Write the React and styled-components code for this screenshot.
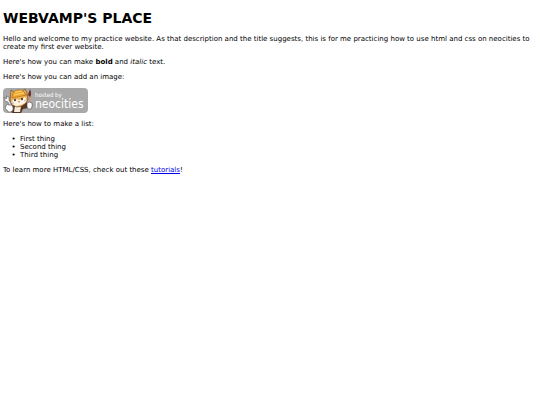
import React from "react";
import styled, { createGlobalStyle } from "styled-components";

const App = () => {
  return (
    <>
      <GlobalStyle />
      <Page>
        <Title>WEBVAMP'S PLACE</Title>
        <Text>
          Hello and welcome to my practice website. As that description and the title suggests, this is for me
          practicing how to use html and css on neocities to create my first ever website.
        </Text>
        <Text>
          Here's how you can make <strong>bold</strong> and <em>italic</em> text.
        </Text>
        <Text>Here's how you can add an image:</Text>
        <NeocitiesBadge />
        <Text>Here's how to make a list:</Text>
        <List>
          <li>First thing</li>
          <li>Second thing</li>
          <li>Third thing</li>
        </List>
        <Text>
          To learn more HTML/CSS, check out these <Link href="#tutorials">tutorials</Link>!
        </Text>
      </Page>
    </>
  );
};

// Penny the cat holding a wrench and a paint brush
const NeocitiesBadge = () => (
  <Badge viewBox="0 0 85 25">
    <rect width="85" height="25" rx="4" fill="#a9a9a9" />
    {/* body */}
    <path d="M9 16 23 14 26 16 25 20 20 21 18 25 9 25 7 20Z" fill="#54382c" />
    <path d="M12 18 18 18 17 24 11 24Z" fill="#f7ead8" />
    {/* head with ears */}
    <path
      d="M8 2 11 4 19 3 22 1 24 5 25 11 23 15 19 18 14 19 9 17 7 13Z"
      fill="#f2b04c"
      stroke="#5c3a1c"
      strokeWidth=".6"
    />
    <path d="M8 13 12 11 17 12 22 9 24 12 22 15 18 17 13 18 9 16Z" fill="#fff4e4" />
    {/* helmet */}
    <path d="M9 8 Q10 2 15 2 Q21 1 22 6 L24 7 9 10Z" fill="#efa52e" stroke="#935e20" strokeWidth=".5" />
    <path d="M12 4 19 3M11 7 21 5" stroke="#ffdc80" strokeWidth=".9" fill="none" />
    {/* face */}
    <ellipse cx="12" cy="12" rx=".9" ry="1.2" fill="#2b2925" />
    <ellipse cx="19" cy="11" rx=".9" ry="1.2" fill="#2b2925" />
    <path d="M15 13 17 13 16 15Z" fill="#d9654b" />
    <path d="M6 12 10 14M7 16 11 15M21 13 25 11" stroke="#5f5143" strokeWidth=".4" />
    {/* wrench and left paw */}
    <path
      d="M1 9 3 11 4 10 3 8 6 9 6 12 9 18 8 20 5 14 2 13Z"
      fill="#f5f5f5"
      stroke="#55504c"
      strokeWidth=".5"
    />
    <path
      d="M3 18 Q4 15 6 17 Q9 16 10 19 Q11 22 8 24 Q5 25 4 22 Q1 21 3 18Z"
      fill="#fff"
      stroke="#4b4542"
      strokeWidth=".6"
    />
    {/* brush and right paw */}
    <path d="M27 8 27 15" stroke="#e5dfd8" strokeWidth="1.8" />
    <path d="M27 8 27 15" stroke="#b4562e" strokeWidth="1" />
    <path d="M27 1 28 4 28 7 27 9 25 7 26 4Z" fill="#742b24" />
    <path
      d="M24 15 Q26 13 29 15 Q30 18 28 21 Q25 22 24 19Z"
      fill="#fff"
      stroke="#4b4542"
      strokeWidth=".6"
    />
    <BadgeText x="32" y="9" fontSize="6">
      hosted by
    </BadgeText>
    <BadgeText x="32" y="20" fontSize="12">
      neocities
    </BadgeText>
  </Badge>
);

export default App;

const GlobalStyle = createGlobalStyle`
  body {
    margin: 0;
    background: #fff;
    color: #000;
    font-family: "DejaVu Sans", Verdana, sans-serif;
    font-size: 7px;
    line-height: 8px;
  }
`;

const Page = styled.main`
  padding: 10px 3px;
`;

const Title = styled.h1`
  margin: 0 0 9px;
  font-size: 14px;
  line-height: 16px;
`;

const Text = styled.p`
  margin: 0 0 7px;
`;

const Badge = styled.svg`
  display: block;
  width: 85px;
  height: 25px;
  margin: 0 0 7px;
`;

const BadgeText = styled.text`
  fill: #fff;
  font-family: "Liberation Sans Narrow", "DejaVu Sans Condensed", sans-serif;
`;

const List = styled.ul`
  margin: 0 0 7px;
  padding-left: 17px;
  list-style-type: "•  ";
`;

const Link = styled.a`
  color: #0000ee;
`;
